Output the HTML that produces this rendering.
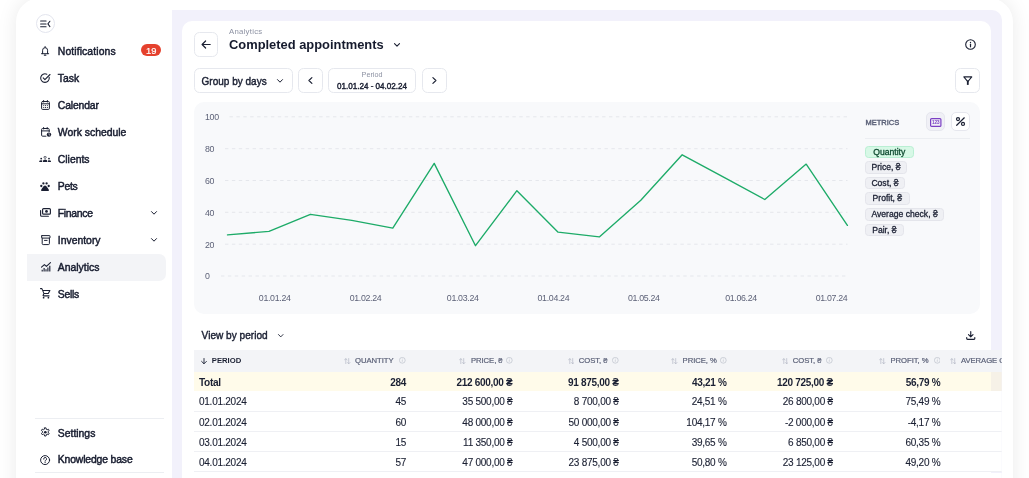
<!DOCTYPE html>
<html lang="en">
<head>
<meta charset="utf-8">
<title>Completed appointments</title>
<style>
*{box-sizing:border-box;margin:0;padding:0}
html,body{width:1029px;height:478px;overflow:hidden;background:#fff}
body{font-family:"Liberation Sans",sans-serif;color:#1b2033;position:relative;will-change:transform}
.abs{position:absolute}
.app{position:absolute;left:16px;top:-2px;width:997px;height:520px;background:#fff;border-radius:24px;box-shadow:0 0 20px rgba(0,0,0,.085)}
.t{position:absolute;white-space:nowrap;line-height:1}
.sb{-webkit-text-stroke:.4px currentColor}
.sy{transform:scaleY(1.1);transform-origin:0 84%}
/* sidebar */
.mi{position:absolute;left:57.8px;font-size:10.4px;white-space:nowrap;line-height:12px;-webkit-text-stroke:.45px #161b2e;color:#161b2e}
.ico{position:absolute;width:12px;height:12px;fill:none;stroke:#1b2033;stroke-width:1;stroke-linecap:round;stroke-linejoin:round;overflow:visible}
.panel{position:absolute;left:171.7px;top:10px;width:830px;height:480px;background:#f2f1fb;border-radius:0 10px 0 0;overflow:hidden}
.card{position:absolute;left:182px;top:20.5px;width:809px;height:470px;background:#fff;border-radius:10px}
.btn{position:absolute;background:#fff;border:1px solid #e6e8ee;border-radius:5.5px}
.tag{position:absolute;height:12.5px;border:1px solid #e4e5eb;background:#eff0f4;border-radius:3.5px;font-size:8.6px;line-height:11.3px;text-align:center;white-space:nowrap;color:#1b2033;-webkit-text-stroke:.3px currentColor}
.tbl{position:absolute;left:0;top:0;width:1029px;height:478px;clip-path:inset(0 27.3px 0 0)}
.th{top:357px;font-size:7.7px;color:#5b6178}
.th.sb{-webkit-text-stroke:.2px #5b6178;letter-spacing:-.05px}
.td{font-size:10px;letter-spacing:-.25px;color:#1b2033;-webkit-text-stroke:.12px #1b2033}
.td.b{font-weight:bold;font-size:10px;letter-spacing:-.3px;-webkit-text-stroke:0}
</style>
</head>
<body>
<div class="app"></div>

<!-- SIDEBAR -->
<div class="abs" style="left:36px;top:14px;width:19px;height:19px;border:1px solid #e3e5ee;border-radius:50%"></div>
<svg class="ico" style="left:40px;top:19.500px;width:10.400px;height:8px" viewBox="0 0 10.400 8"><path d="M0.600 1H6.100M0.600 3.900H6.100M0.600 6.800H6.100M9.900 1.200L7.900 3.900L9.900 6.600" stroke-width="1.050"/></svg>

<div class="abs" style="left:27px;top:254px;width:139.2px;height:26.8px;background:#f3f4f7;border-radius:0 7px 7px 0"></div>

<div class="mi" style="top:45.7px;letter-spacing:0.1px">Notifications</div>
<div class="mi" style="top:72.7px">Task</div>
<div class="mi" style="top:99.9px;letter-spacing:-0.15px">Calendar</div>
<div class="mi" style="top:126.8px">Work schedule</div>
<div class="mi" style="top:154.1px">Clients</div>
<div class="mi" style="top:181.2px;letter-spacing:-0.3px">Pets</div>
<div class="mi" style="top:208.4px;letter-spacing:-0.3px">Finance</div>
<div class="mi" style="top:235.3px">Inventory</div>
<div class="mi" style="top:262.4px">Analytics</div>
<div class="mi" style="top:289.1px;letter-spacing:-0.3px">Sells</div>
<div class="mi" style="top:427.5px">Settings</div>
<div class="mi" style="top:454.4px;letter-spacing:-0.15px">Knowledge base</div>

<div class="abs" style="left:141.3px;top:44.4px;width:20px;height:11.8px;background:#e5412d;border-radius:6px"></div>
<div class="t" style="left:141.3px;top:45.8px;width:20px;text-align:center;font-size:9.4px;color:#fff;-webkit-text-stroke:.2px #fff">19</div>

<div class="abs" style="left:35px;top:418px;width:129px;height:1px;background:#eceef2"></div>
<div class="abs" style="left:35px;top:471.6px;width:129px;height:1px;background:#eceef2"></div>


<!-- sidebar icons -->
<svg class="ico" style="left:41.2px;top:45.8px;width:8.2px;height:10px" viewBox="0 0 8.2 10"><path d="M1.6 7.7V4.2A2.5 2.5 0 0 1 6.600 4.200V7.700M0.500 7.700H7.700M4.100 0.500V1.500"/><path d="M3.400 9.200H4.800" stroke-width="1.200"/></svg>
<svg class="ico" style="left:40px;top:73px;width:10.6px;height:10px" viewBox="0 0 10.6 10"><path d="M9.2 4.3A4.3 4.3 0 1 1 6.8 1.2M3.2 4.9L4.9 6.6L10 1.5" stroke-width="1.1"/></svg>
<svg class="ico" style="left:41px;top:100.2px;width:9px;height:10px" viewBox="0 0 9 10"><rect x=".6" y="1.5" width="7.8" height="7.9" rx="1"/><path d="M0.6 3.8H8.4M2.6 0.5V2M6.4 0.5V2"/><path d="M2.3 5.6H6.8M2.3 7.5H6.8" stroke-width="1" stroke-dasharray=".9 .9" stroke-linecap="butt"/></svg>
<svg class="ico" style="left:41px;top:127.3px;width:10.4px;height:10px" viewBox="0 0 10.4 10"><path d="M5 9.2H1.6Q0.6 9.2 0.6 8.2V2.5Q0.6 1.5 1.6 1.5H7.2Q8.2 1.5 8.2 2.5V4.6M0.6 3.9H8.2M2.6 0.5V2M6.2 0.5V2"/><circle cx="8" cy="7.6" r="2.2" fill="#1b2033" stroke="none"/><path d="M8 6.6V7.7L8.8 8.2" stroke="#fff" stroke-width=".6"/></svg>
<svg class="abs" style="left:39px;top:156px;width:12.2px;height:6.4px" viewBox="0 0 12.2 6.4" fill="#1b2033"><circle cx="6.1" cy="1.3" r="1.1" fill="none" stroke="#1b2033" stroke-width=".7"/><path d="M3.9 6.2V5.2Q3.9 3.6 6.1 3.6Q8.3 3.6 8.3 5.2V6.2Z"/><circle cx="2.2" cy="2.6" r=".9"/><path d="M0.2 6.2V5.6Q0.2 4.3 2.2 4.3Q3.2 4.3 3.3 4.6Q3.1 5 3.1 6.2Z"/><circle cx="10" cy="2.6" r=".9"/><path d="M12 6.2V5.6Q12 4.3 10 4.3Q9 4.3 8.9 4.6Q9.1 5 9.1 6.2Z"/></svg>
<svg class="abs" style="left:40.2px;top:181.5px;width:10px;height:9.8px" viewBox="0 0 10 9.8" fill="#1b2033"><circle cx="1.3" cy="4" r="1.15"/><circle cx="3.4" cy="1.4" r="1.15"/><circle cx="6.6" cy="1.4" r="1.15"/><circle cx="8.7" cy="4" r="1.15"/><path d="M5 3.6Q6.3 3.6 7.2 5.2L8.6 7.2Q9.3 8.6 8.2 9.3Q7.4 9.8 5 9.8Q2.6 9.8 1.8 9.3Q0.7 8.6 1.4 7.2L2.8 5.2Q3.7 3.6 5 3.6Z"/></svg>
<svg class="ico" style="left:39.8px;top:207.6px;width:11px;height:9.4px" viewBox="0 0 11 9.4"><rect x="2.6" y=".6" width="7.8" height="5.6" rx="1" stroke-width="1.15"/><circle cx="6.5" cy="3.4" r="1.35" fill="#1b2033" stroke="none"/><path d="M0.6 2.6V7.3Q0.6 8.3 1.6 8.3H8.4" stroke-width="1.15"/></svg>
<svg class="ico" style="left:40.8px;top:234.6px;width:9.6px;height:10.2px" viewBox="0 0 9.6 10.2"><rect x=".6" y=".6" width="8.4" height="2.5" rx=".4"/><path d="M1.2 3.1V8.6Q1.2 9.6 2.2 9.6H7.4Q8.4 9.6 8.4 8.6V3.1M3.5 5.4H6.1"/></svg>
<svg class="ico" style="left:40.6px;top:261.8px;width:10px;height:9.6px" viewBox="0 0 10 9.6"><path d="M0.5 5.2L3.4 2.6L5.4 4.4L9.5 0.6" stroke-width="1.1"/><path d="M1.2 9.4V7.8M3.1 9.4V5.9M5 9.4V7.2M6.9 9.4V5.600M8.800 9.400V3.800" stroke-width="1.150" stroke-linecap="butt"/></svg>
<svg class="ico" style="left:40px;top:288.2px;width:10.6px;height:10.8px" viewBox="0 0 10.6 10.8"><path d="M0.5 0.6H1.9L4 5.6H8.3L9.9 2.4H3M4 5.6L3.1 7.3Q2.9 7.9 3.6 7.9H9.1" stroke-width="1.05"/><circle cx="3.6" cy="9.7" r=".85" fill="#1b2033" stroke="none"/><circle cx="8.4" cy="9.7" r=".85" fill="#1b2033" stroke="none"/></svg>
<svg class="ico" viewBox="0 0 24 24" style="left:40px;top:427.2px;width:10.6px;height:10.6px;stroke-width:2.2"><circle cx="12" cy="12" r="3" fill="#1b2033" stroke="none"/><path d="M10.3 2h3.4l.5 3.2 1.9 1.1 3-1.2 1.7 3-2.5 2v2.2l2.5 2-1.7 3-3-1.200-1.900 1.100-.5 3.200h-3.400l-.5-3.200-1.900-1.100-3 1.200-1.700-3 2.500-2V9.900l-2.500-2 1.700-3 3 1.200 1.900-1.100z"/></svg>
<svg class="ico" style="left:40.2px;top:454.5px;width:10.2px;height:10.2px" viewBox="0 0 10.2 10.2"><circle cx="5.1" cy="5.1" r="4.5" stroke-width="1"/><path d="M3.7 4.1A1.45 1.45 0 1 1 5.6 5.3Q5.1 5.6 5.1 6.2" stroke-width="1"/><circle cx="5.1" cy="7.6" r=".6" fill="#1b2033" stroke="none"/></svg>
<svg class="ico" style="left:151.2px;top:211.4px;width:6px;height:4px;stroke-width:1" viewBox="0 0 6 4"><path d="M0.5 0.6L3 3.2L5.5 0.6"/></svg>
<svg class="ico" style="left:151.2px;top:238.4px;width:6px;height:4px;stroke-width:1" viewBox="0 0 6 4"><path d="M0.5 0.6L3 3.2L5.5 0.6"/></svg>

<!-- MAIN -->
<div class="panel"></div>
<div class="card"></div>


<!-- header -->
<div class="btn" style="left:194px;top:32px;width:24px;height:25px"></div>
<svg class="ico" style="left:201px;top:40px;width:10px;height:9px;stroke-width:1.2" viewBox="0 0 10 9"><path d="M9.2 4.5H1.2M4.6 1L1.1 4.5L4.6 8"/></svg>
<div class="t" id="h_an" style="left:229px;top:28px;font-size:7.8px;letter-spacing:.25px;color:#8d92a3">Analytics</div>
<div class="t" id="h_title" style="left:229px;top:38.6px;font-size:12.9px;font-weight:bold;color:#151a2d">Completed appointments</div>
<svg class="ico" style="left:394px;top:43px;width:6px;height:4px;stroke-width:1.1" viewBox="0 0 6 4"><path d="M0.5 0.6L3 3.2L5.5 0.6"/></svg>
<svg class="ico" style="left:965px;top:39px;width:11px;height:11px;stroke-width:1.1" viewBox="0 0 11 11"><circle cx="5.5" cy="5.5" r="4.8"/><path d="M5.5 5.2V7.8" stroke-width="1.2"/><circle cx="5.5" cy="3.4" r=".7" fill="#1b2033" stroke="none"/></svg>

<!-- toolbar -->
<div class="btn" style="left:194px;top:68px;width:98.500px;height:25.200px"></div>
<div class="t sb sy" id="tb_group" style="left:201.6px;top:76.8px;font-size:10px">Group by days</div>
<svg class="ico" style="left:276.5px;top:79px;width:6px;height:4px;stroke-width:1" viewBox="0 0 6 4"><path d="M0.5 0.6L3 3.2L5.5 0.6"/></svg>
<div class="btn" style="left:298px;top:68px;width:24.600px;height:25.200px"></div>
<svg class="ico" style="left:308.2px;top:77.3px;width:5px;height:7px;stroke-width:1.15" viewBox="0 0 5 7"><path d="M3.9 0.700L0.900 3.500L3.900 6.300"/></svg>
<div class="btn" style="left:328px;top:68px;width:88px;height:25.200px"></div>
<div class="t" id="tb_plabel" style="left:328px;width:88px;text-align:center;top:70.8px;font-size:7.2px;color:#8d92a3">Period</div>
<div class="t sb sy" id="tb_pval" style="left:328px;width:88px;text-align:center;top:82.8px;font-size:8.1px">01.01.24 - 04.02.24</div>
<div class="btn" style="left:422px;top:68px;width:24.600px;height:25.200px"></div>
<svg class="ico" style="left:431.5px;top:77.3px;width:5px;height:7px;stroke-width:1.15" viewBox="0 0 5 7"><path d="M0.900 0.700L3.900 3.500L0.900 6.300"/></svg>
<div class="btn" style="left:955.2px;top:68px;width:25.300px;height:25px"></div>
<svg class="abs" style="left:963.2px;top:75.800px;width:9.600px;height:9.400px" viewBox="0 0 9.600 9.400"><path d="M0.800 0.900H8.800L4.800 5.600Z" fill="none" stroke="#1b2033" stroke-width="1.050" stroke-linejoin="round"/><rect x="3.900" y="4.600" width="1.800" height="4.300" fill="#1b2033"/></svg>

<!-- chart -->
<div class="abs" style="left:194px;top:101.5px;width:786px;height:212.5px;background:#f8f9fb;border-radius:10px"></div>
<svg class="abs" style="left:194px;top:101px;width:786px;height:213px" viewBox="194 101 786 213">
<g stroke="#e5e7ec" stroke-width="1" stroke-dasharray="3.4 3.5" fill="none">
<path d="M229.5 116.8H847.5"/><path d="M225 148.7H847.5"/><path d="M225 180.5H847.5"/><path d="M225 212.3H847.5"/><path d="M225 244.2H847.5"/><path d="M221 276H847.5"/>
</g>
<polyline fill="none" stroke="#1dab68" stroke-width="1.35" stroke-linejoin="round" stroke-linecap="round" points="227.5,234.9 269,231.4 310.4,214.3 351.8,220.4 392.8,228.1 434.2,163.4 475.5,245.7 516.9,190.7 558.1,232.2 599.3,236.9 640.8,200.3 682.2,154.8 723.6,177.2 764.8,199.5 806.2,164.1 847.4,225.4"/>
<g font-family="Liberation Sans, sans-serif" font-size="8.8" letter-spacing="-.32" fill="#5d6278">
<text x="205" y="120.3">100</text><text x="205" y="152.1">80</text><text x="205" y="183.9">60</text><text x="205" y="215.700">40</text><text x="205" y="247.600">20</text><text x="205" y="279.400">0</text>
<text x="274.7" y="301.3" text-anchor="middle">01.01.24</text><text x="365.5" y="301.3" text-anchor="middle">01.02.24</text><text x="462.7" y="301.3" text-anchor="middle">01.03.24</text><text x="553.4" y="301.3" text-anchor="middle">01.04.24</text><text x="643.8" y="301.3" text-anchor="middle">01.05.24</text><text x="741" y="301.3" text-anchor="middle">01.06.24</text><text x="831.5" y="301.3" text-anchor="middle">01.07.24</text>
</g>
</svg>

<!-- metrics -->
<div class="t sb" id="m_title" style="left:865.5px;top:118.9px;font-size:7.5px;color:#5b6178">METRICS</div>
<div class="abs" style="left:926px;top:112px;width:19px;height:19px;background:#f0f0f6;border:1px solid #e6e7ee;border-radius:5px"></div>
<svg class="abs" style="left:930px;top:117.5px;width:11.5px;height:9px" viewBox="0 0 11.5 9"><rect x=".6" y=".6" width="10.3" height="7.8" rx="1" fill="none" stroke="#7b3fc4" stroke-width="1.2"/><text x="5.75" y="6.3" text-anchor="middle" font-family="Liberation Sans, sans-serif" font-size="4.6" font-weight="bold" fill="#7b3fc4">123</text></svg>
<div class="abs" style="left:950.5px;top:112px;width:19px;height:19px;background:#fff;border:1px solid #e6e7ee;border-radius:5px"></div>
<svg class="ico" style="left:955.5px;top:117px;width:9px;height:9px;stroke-width:1.2" viewBox="0 0 9 9"><path d="M8.3 0.8L0.7 8.3"/><circle cx="2" cy="2.1" r="1.5"/><circle cx="7" cy="6.9" r="1.5"/></svg>
<div class="abs" style="left:865px;top:138px;width:104.5px;height:1px;background:#eceef2"></div>
<div class="tag" style="left:865px;top:145.5px;width:48.5px;background:#d7f8e6;border-color:#b9efd3;color:#0e4a30" id="tg0">Quantity</div>
<div class="tag" style="left:865px;top:161.2px;width:42px" id="tg1">Price, ₴</div>
<div class="tag" style="left:865px;top:176.8px;width:40px" id="tg2">Cost, ₴</div>
<div class="tag" style="left:865px;top:192.4px;width:44.7px" id="tg3">Profit, ₴</div>
<div class="tag" style="left:865px;top:208px;width:79.2px" id="tg4">Average check, ₴</div>
<div class="tag" style="left:865px;top:223.6px;width:38.7px" id="tg5">Pair, ₴</div>

<!-- table -->
<div class="t sb sy" id="vbp" style="left:201.6px;top:331px;font-size:10.1px">View by period</div>
<svg class="ico" style="left:277.5px;top:333.5px;width:5.5px;height:3.6px;stroke-width:1" viewBox="0 0 6 4"><path d="M0.5 0.6L3 3.2L5.5 0.6"/></svg>
<svg class="ico" style="left:966px;top:331px;width:9.5px;height:9px;stroke-width:1.15" viewBox="0 0 9.5 9"><path d="M4.75 0.6V5.6M2.5 3.6L4.75 5.8L7 3.6M0.7 6.6V7.6Q0.7 8.3 1.5 8.3H8Q8.8 8.3 8.8 7.6V6.6"/></svg>
<div class="tbl">
<div class="abs" style="left:193.5px;top:350px;width:820px;height:21.5px;background:#f3f4f7"></div>
<svg class="ico" style="left:201.2px;top:357.6px;width:6px;height:6.4px;stroke-width:.9" viewBox="0 0 6 6.4"><path d="M3 0.5V5.6M0.6 3.4L3 5.8L5.4 3.4"/></svg>
<div class="t th" id="th_p" style="left:211.8px;color:#1b2033;font-weight:bold">PERIOD</div>
<svg class="abs" style="left:344.2px;top:357.5px;width:6.5px;height:6.5px" viewBox="0 0 6.5 6.5"><path d="M1.8 6V0.8M0.5 2L1.8 0.6L3.1 2M4.7 0.5V5.7M3.4 4.5L4.7 5.9L6 4.5" fill="none" stroke="#b4b8c5" stroke-width=".7" stroke-linecap="round" stroke-linejoin="round"/></svg>
<div class="t th sb" id="th0" style="left:355px">QUANTITY</div>
<svg class="abs" style="left:399.3px;top:357.4px;width:6.6px;height:6.6px" viewBox="0 0 6.6 6.6"><circle cx="3.3" cy="3.3" r="2.9" fill="none" stroke="#b4b8c5" stroke-width=".6"/><path d="M3.3 3.1V4.7" stroke="#b4b8c5" stroke-width=".6"/><circle cx="3.3" cy="2" r=".4" fill="#b4b8c5"/></svg>
<svg class="abs" style="left:459.2px;top:357.5px;width:6.5px;height:6.5px" viewBox="0 0 6.5 6.5"><path d="M1.8 6V0.8M0.5 2L1.8 0.6L3.1 2M4.7 0.5V5.7M3.4 4.5L4.7 5.9L6 4.5" fill="none" stroke="#b4b8c5" stroke-width=".7" stroke-linecap="round" stroke-linejoin="round"/></svg>
<div class="t th sb" id="th1" style="left:470.9px">PRICE, ₴</div>
<svg class="abs" style="left:506.1px;top:357.4px;width:6.6px;height:6.6px" viewBox="0 0 6.6 6.6"><circle cx="3.3" cy="3.3" r="2.9" fill="none" stroke="#b4b8c5" stroke-width=".6"/><path d="M3.3 3.1V4.7" stroke="#b4b8c5" stroke-width=".6"/><circle cx="3.3" cy="2" r=".4" fill="#b4b8c5"/></svg>
<svg class="abs" style="left:567.6px;top:357.5px;width:6.5px;height:6.5px" viewBox="0 0 6.5 6.5"><path d="M1.8 6V0.8M0.5 2L1.8 0.6L3.1 2M4.7 0.5V5.7M3.4 4.5L4.7 5.9L6 4.5" fill="none" stroke="#b4b8c5" stroke-width=".7" stroke-linecap="round" stroke-linejoin="round"/></svg>
<div class="t th sb" id="th2" style="left:578.8px">COST, ₴</div>
<svg class="abs" style="left:612.2px;top:357.4px;width:6.6px;height:6.6px" viewBox="0 0 6.6 6.6"><circle cx="3.3" cy="3.3" r="2.9" fill="none" stroke="#b4b8c5" stroke-width=".6"/><path d="M3.3 3.1V4.7" stroke="#b4b8c5" stroke-width=".6"/><circle cx="3.3" cy="2" r=".4" fill="#b4b8c5"/></svg>
<svg class="abs" style="left:671.4px;top:357.5px;width:6.5px;height:6.5px" viewBox="0 0 6.5 6.5"><path d="M1.8 6V0.8M0.5 2L1.8 0.6L3.1 2M4.7 0.5V5.7M3.4 4.5L4.7 5.9L6 4.5" fill="none" stroke="#b4b8c5" stroke-width=".7" stroke-linecap="round" stroke-linejoin="round"/></svg>
<div class="t th sb" id="th3" style="left:682.6px">PRICE, %</div>
<svg class="abs" style="left:720px;top:357.4px;width:6.6px;height:6.6px" viewBox="0 0 6.6 6.6"><circle cx="3.3" cy="3.3" r="2.9" fill="none" stroke="#b4b8c5" stroke-width=".6"/><path d="M3.3 3.1V4.7" stroke="#b4b8c5" stroke-width=".6"/><circle cx="3.3" cy="2" r=".4" fill="#b4b8c5"/></svg>
<svg class="abs" style="left:781.6px;top:357.5px;width:6.5px;height:6.5px" viewBox="0 0 6.5 6.5"><path d="M1.8 6V0.8M0.5 2L1.8 0.6L3.1 2M4.7 0.5V5.7M3.4 4.5L4.7 5.9L6 4.5" fill="none" stroke="#b4b8c5" stroke-width=".7" stroke-linecap="round" stroke-linejoin="round"/></svg>
<div class="t th sb" id="th4" style="left:792.8px">COST, ₴</div>
<svg class="abs" style="left:826.2px;top:357.4px;width:6.6px;height:6.6px" viewBox="0 0 6.6 6.6"><circle cx="3.3" cy="3.3" r="2.9" fill="none" stroke="#b4b8c5" stroke-width=".6"/><path d="M3.3 3.1V4.7" stroke="#b4b8c5" stroke-width=".6"/><circle cx="3.3" cy="2" r=".4" fill="#b4b8c5"/></svg>
<svg class="abs" style="left:879.3px;top:357.5px;width:6.5px;height:6.5px" viewBox="0 0 6.5 6.5"><path d="M1.8 6V0.8M0.5 2L1.8 0.6L3.1 2M4.7 0.5V5.7M3.4 4.5L4.7 5.9L6 4.5" fill="none" stroke="#b4b8c5" stroke-width=".7" stroke-linecap="round" stroke-linejoin="round"/></svg>
<div class="t th sb" id="th5" style="left:890.5px">PROFIT, %</div>
<svg class="abs" style="left:933.8px;top:357.4px;width:6.6px;height:6.6px" viewBox="0 0 6.6 6.6"><circle cx="3.3" cy="3.3" r="2.9" fill="none" stroke="#b4b8c5" stroke-width=".6"/><path d="M3.3 3.1V4.7" stroke="#b4b8c5" stroke-width=".6"/><circle cx="3.3" cy="2" r=".4" fill="#b4b8c5"/></svg>
<svg class="abs" style="left:949.9px;top:357.5px;width:6.5px;height:6.5px" viewBox="0 0 6.5 6.5"><path d="M1.8 6V0.8M0.5 2L1.8 0.6L3.1 2M4.7 0.5V5.7M3.4 4.5L4.7 5.9L6 4.5" fill="none" stroke="#b4b8c5" stroke-width=".7" stroke-linecap="round" stroke-linejoin="round"/></svg>
<div class="t th sb" id="th6" style="left:960.9px">AVERAGE CHECK, ₴</div>
<div class="abs" style="left:193.5px;top:371.5px;width:820px;height:19.8px;background:rgba(255,244,190,.32)"></div>
<div class="t td b" id="r0c" style="font-size:10.1px;left:199px;top:377.7px">Total</div>
<div class="t td b" id="r0c0" style="right:623px;top:377.7px">284</div>
<div class="t td b" id="r0c1" style="right:516.6px;top:377.7px">212 600,00 ₴</div>
<div class="t td b" id="r0c2" style="right:410.4px;top:377.7px">91 875,00 ₴</div>
<div class="t td b" id="r0c3" style="right:302.4px;top:377.7px">43,21 %</div>
<div class="t td b" id="r0c4" style="right:196.20000000000005px;top:377.7px">120 725,00 ₴</div>
<div class="t td b" id="r0c5" style="right:88.60000000000002px;top:377.7px">56,79 %</div>
<div class="abs" style="left:193.5px;top:391.3px;width:820px;height:20.3px;background:#fff;border-bottom:1px solid #eff0f4"></div>
<div class="t td" id="r1c" style="left:199px;top:397.2px">01.01.2024</div>
<div class="t td" id="r1c0" style="right:623px;top:397.2px">45</div>
<div class="t td" id="r1c1" style="right:516.6px;top:397.2px">35 500,00 ₴</div>
<div class="t td" id="r1c2" style="right:410.4px;top:397.2px">8 700,00 ₴</div>
<div class="t td" id="r1c3" style="right:302.4px;top:397.2px">24,51 %</div>
<div class="t td" id="r1c4" style="right:196.20000000000005px;top:397.2px">26 800,00 ₴</div>
<div class="t td" id="r1c5" style="right:88.60000000000002px;top:397.2px">75,49 %</div>
<div class="abs" style="left:193.5px;top:411.6px;width:820px;height:20.3px;background:#fff;border-bottom:1px solid #eff0f4"></div>
<div class="t td" id="r2c" style="left:199px;top:417.5px">02.01.2024</div>
<div class="t td" id="r2c0" style="right:623px;top:417.5px">60</div>
<div class="t td" id="r2c1" style="right:516.6px;top:417.5px">48 000,00 ₴</div>
<div class="t td" id="r2c2" style="right:410.4px;top:417.5px">50 000,00 ₴</div>
<div class="t td" id="r2c3" style="right:302.4px;top:417.5px">104,17 %</div>
<div class="t td" id="r2c4" style="right:196.20000000000005px;top:417.5px">-2 000,00 ₴</div>
<div class="t td" id="r2c5" style="right:88.60000000000002px;top:417.5px">-4,17 %</div>
<div class="abs" style="left:193.5px;top:431.9px;width:820px;height:20.3px;background:#fff;border-bottom:1px solid #eff0f4"></div>
<div class="t td" id="r3c" style="left:199px;top:437.8px">03.01.2024</div>
<div class="t td" id="r3c0" style="right:623px;top:437.8px">15</div>
<div class="t td" id="r3c1" style="right:516.6px;top:437.8px">11 350,00 ₴</div>
<div class="t td" id="r3c2" style="right:410.4px;top:437.8px">4 500,00 ₴</div>
<div class="t td" id="r3c3" style="right:302.4px;top:437.8px">39,65 %</div>
<div class="t td" id="r3c4" style="right:196.20000000000005px;top:437.8px">6 850,00 ₴</div>
<div class="t td" id="r3c5" style="right:88.60000000000002px;top:437.8px">60,35 %</div>
<div class="abs" style="left:193.5px;top:452.2px;width:820px;height:20.3px;background:#fff;border-bottom:1px solid #eff0f4"></div>
<div class="t td" id="r4c" style="left:199px;top:458.1px">04.01.2024</div>
<div class="t td" id="r4c0" style="right:623px;top:458.1px">57</div>
<div class="t td" id="r4c1" style="right:516.6px;top:458.1px">47 000,00 ₴</div>
<div class="t td" id="r4c2" style="right:410.4px;top:458.1px">23 875,00 ₴</div>
<div class="t td" id="r4c3" style="right:302.4px;top:458.1px">50,80 %</div>
<div class="t td" id="r4c4" style="right:196.20000000000005px;top:458.1px">23 125,00 ₴</div>
<div class="t td" id="r4c5" style="right:88.60000000000002px;top:458.1px">49,20 %</div>
<div class="abs" style="left:193.5px;top:472.5px;width:820px;height:20.3px;background:#fff;border-bottom:1px solid #eff0f4"></div>
<div class="t td" id="r5c" style="left:199px;top:478.4px">05.01.2024</div>
<div class="t td" id="r5c0" style="right:623px;top:478.4px">38</div>
<div class="t td" id="r5c1" style="right:516.6px;top:478.4px">29 400,00 ₴</div>
<div class="t td" id="r5c2" style="right:410.4px;top:478.4px">12 600,00 ₴</div>
<div class="t td" id="r5c3" style="right:302.4px;top:478.4px">42,86 %</div>
<div class="t td" id="r5c4" style="right:196.20000000000005px;top:478.4px">16 800,00 ₴</div>
<div class="t td" id="r5c5" style="right:88.60000000000002px;top:478.4px">57,14 %</div>
</div>
</body>
</html>
